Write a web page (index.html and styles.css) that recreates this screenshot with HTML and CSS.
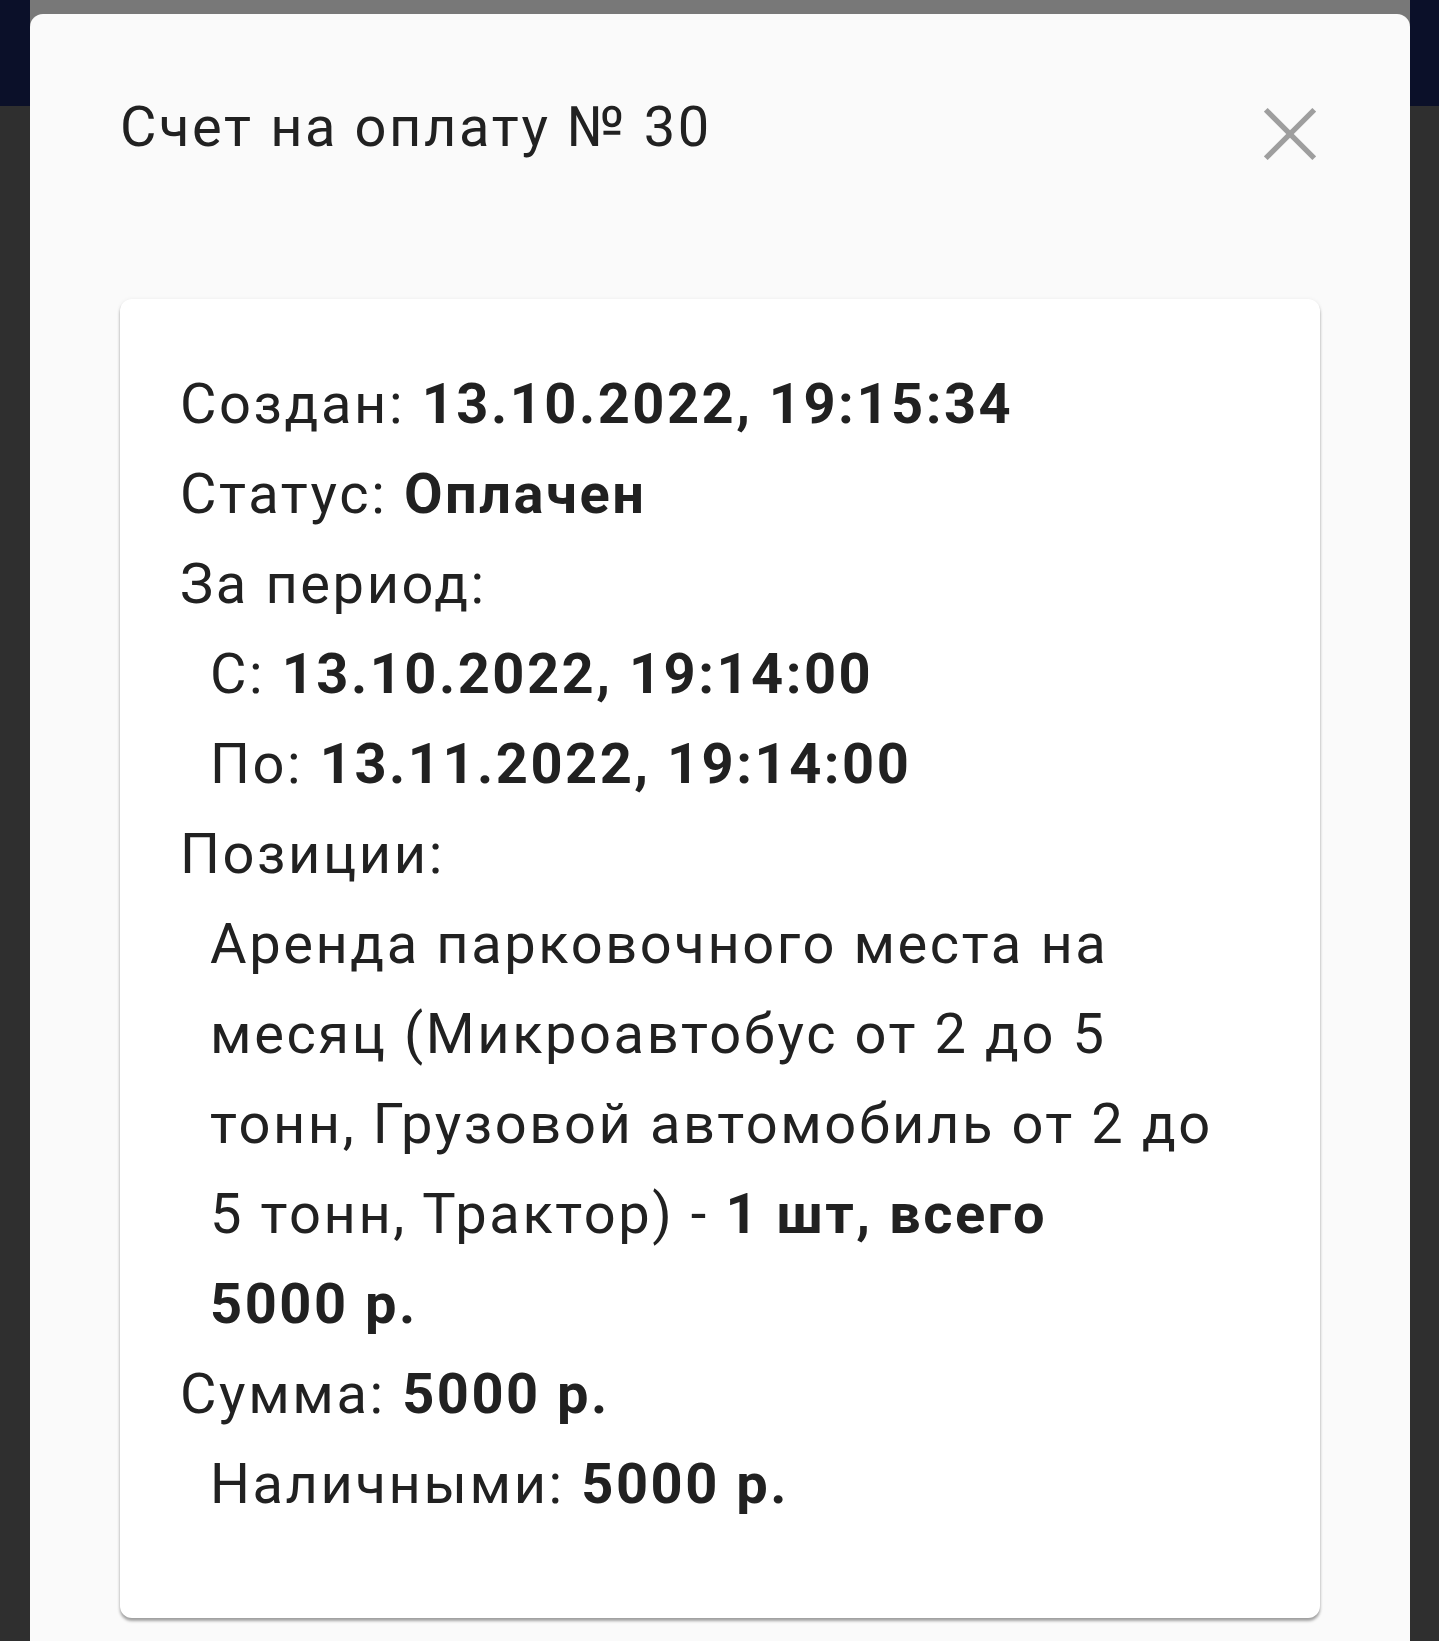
FILE: index.html
```html
<!DOCTYPE html>
<html lang="ru">
<head>
<meta charset="utf-8">
<title>Счет на оплату № 30</title>
<link rel="stylesheet" href="styles.css">
</head>
<body>
<div class="app">
  <header class="appbar"></header>
  <main class="content"></main>
</div>
<div class="sheet">
  <section class="dialog">
    <div class="dialog-head">
      <h1 class="dialog-title">Счет на оплату № 30</h1>
      <svg class="close" width="52" height="52" viewBox="0 0 52 52" aria-label="Закрыть">
        <line x1="1.8" y1="1.8" x2="50.2" y2="50.2"/>
        <line x1="50.2" y1="1.8" x2="1.8" y2="50.2"/>
      </svg>
    </div>
    <div class="card">
      <div class="row">Создан: <b>13.10.2022, 19:15:34</b></div>
      <div class="row">Статус: <b>Оплачен</b></div>
      <div class="row">За период:</div>
      <div class="row sub">С: <b>13.10.2022, 19:14:00</b></div>
      <div class="row sub">По: <b>13.11.2022, 19:14:00</b></div>
      <div class="row">Позиции:</div>
      <div class="row sub">Аренда парковочного места на<br>месяц (Микроавтобус от 2 до 5<br>тонн, Грузовой автомобиль от 2 до<br>5 тонн, Трактор) - <b>1 шт, всего<br>5000 р.</b></div>
      <div class="row">Сумма: <b>5000 р.</b></div>
      <div class="row sub">Наличными: <b>5000 р.</b></div>
    </div>
  </section>
</div>
</body>
</html>
```

FILE: styles.css
```css
html, body {
  margin: 0;
  padding: 0;
  height: 100%;
}

body {
  background: #2f2f2f;
  font-family: Roboto, "Noto Sans", "Liberation Sans", sans-serif;
  color: #212121;
  overflow: hidden;
}

.app {
  display: flex;
  flex-direction: column;
  height: 100%;
}

.appbar {
  height: 106px;
  background: #0b1029;
  flex: none;
}

.content {
  flex: 1;
  background: #2f2f2f;
}

.sheet {
  position: absolute;
  top: 0;
  left: 30px;
  width: 1380px;
  bottom: 0;
  padding-top: 14px;
  background: #787878;
  box-sizing: border-box;
}

.dialog {
  background: #fafafa;
  border-radius: 13px 13px 0 0;
  height: 100%;
  padding: 80px 90px 0 90px;
  box-sizing: border-box;
}

.dialog-head {
  display: flex;
  align-items: flex-start;
  justify-content: space-between;
}

.dialog-title {
  margin: 0;
  font-size: 56px;
  font-weight: 400;
  line-height: 66px;
  letter-spacing: 2.6px;
  color: #212121;
}

.close {
  margin-top: 14px;
  margin-right: 4px;
  stroke: #9e9e9e;
  stroke-width: 5.2;
  fill: none;
}

.card {
  margin-top: 139px;
  background: #ffffff;
  border-radius: 12px;
  box-shadow: 0 3px 3px rgba(0, 0, 0, 0.35), 0 0 4px rgba(0, 0, 0, 0.06);
  padding: 60px 62px 89px 60px;
}

.row {
  font-size: 56px;
  line-height: 90px;
  letter-spacing: 2.6px;
}

.row b {
  font-weight: 700;
  letter-spacing: 2.5px;
}

.row.sub {
  padding-left: 30px;
}
```
